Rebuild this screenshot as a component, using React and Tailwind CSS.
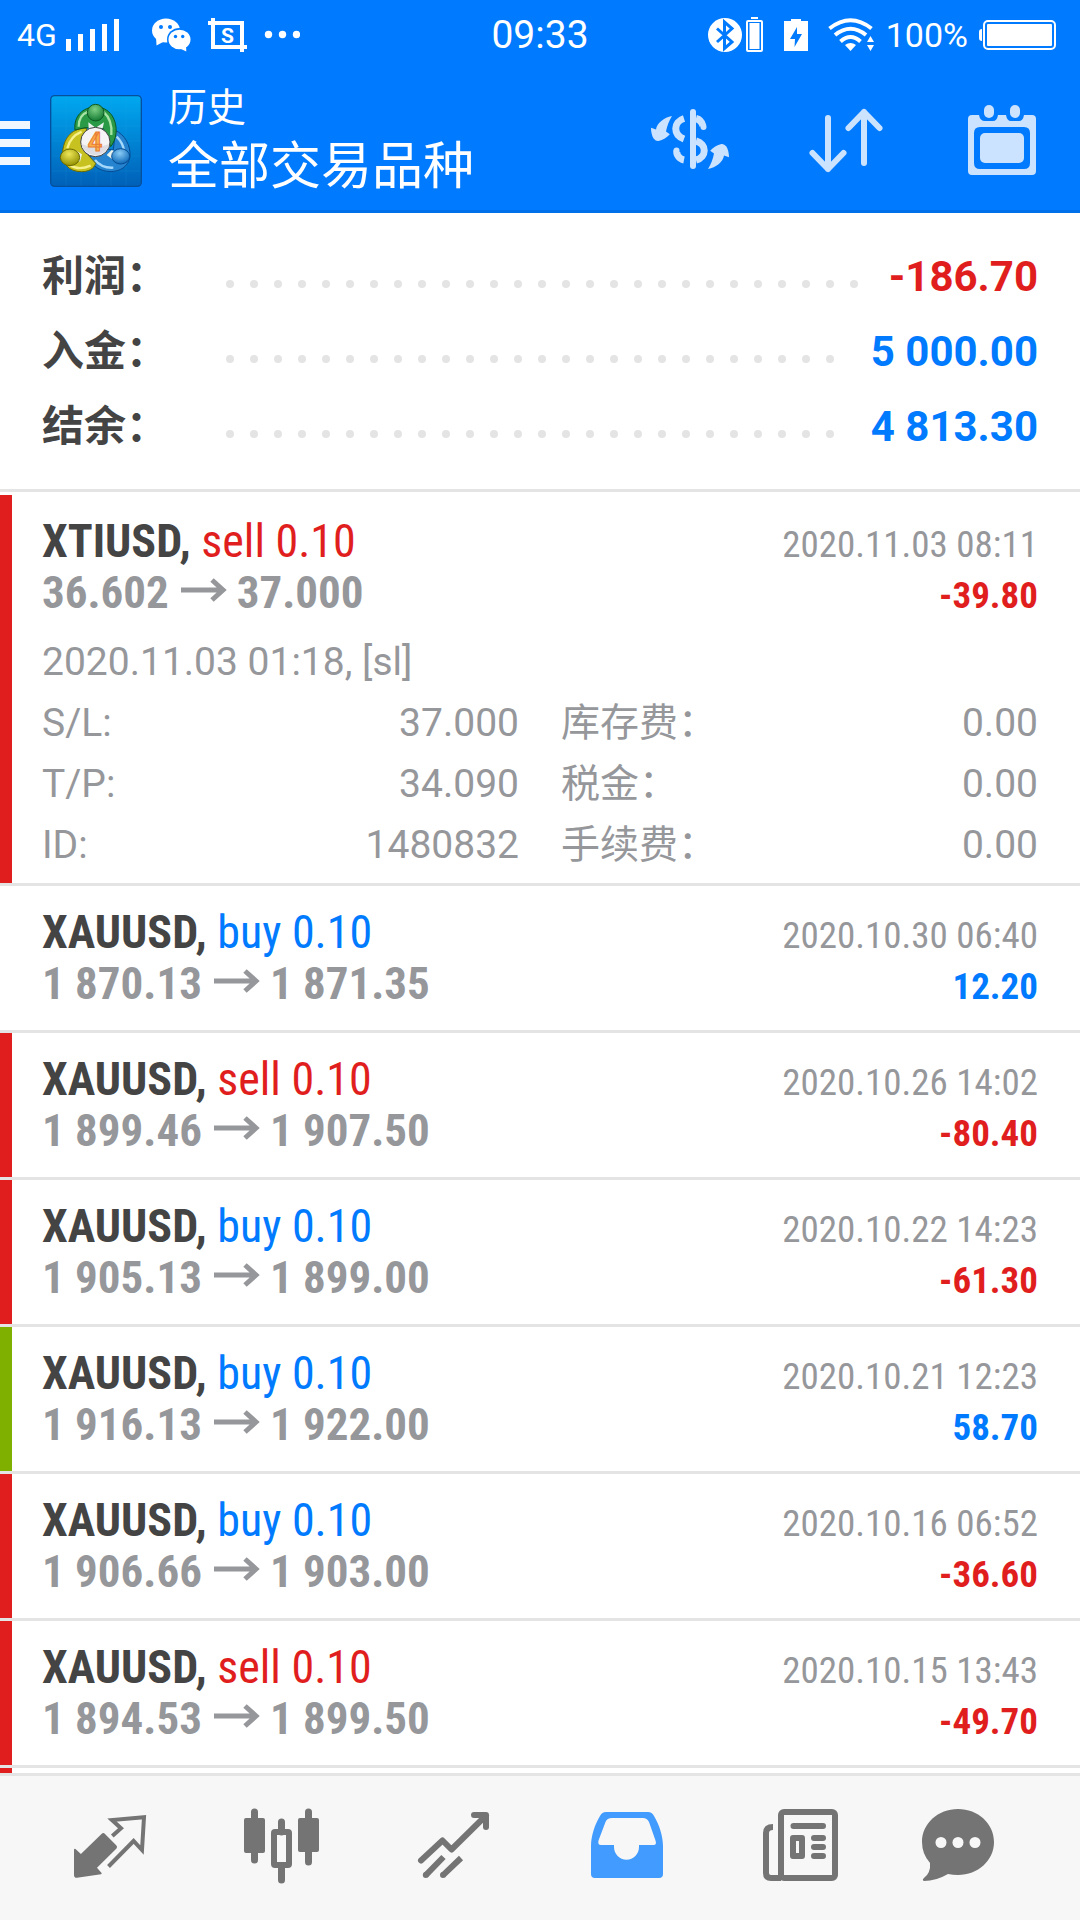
import React from 'react';

const summary = [
    { label: '利润：', value: '-186.70', negative: true },
    { label: '入金：', value: '5 000.00' },
    { label: '结余：', value: '4 813.30' }
];

const openDeal = {
    symbol: 'XTIUSD', side: 'sell', volume: '0.10', from: '36.602', to: '37.000',
    time: '2020.11.03 08:11', profit: '-39.80', bar: 'border-[#e11e1e]',
    comment: '2020.11.03 01:18, [sl]',
    details: [
        ['S/L:', '37.000'], ['库存费：', '0.00'],
        ['T/P:', '34.090'], ['税金：', '0.00'],
        ['ID:', '1480832'], ['手续费：', '0.00']
    ]
};

const deals = [
    { symbol: 'XAUUSD', side: 'buy', volume: '0.10', from: '1 870.13', to: '1 871.35', time: '2020.10.30 06:40', profit: '12.20', bar: 'border-white' },
    { symbol: 'XAUUSD', side: 'sell', volume: '0.10', from: '1 899.46', to: '1 907.50', time: '2020.10.26 14:02', profit: '-80.40', bar: 'border-[#e11e1e]' },
    { symbol: 'XAUUSD', side: 'buy', volume: '0.10', from: '1 905.13', to: '1 899.00', time: '2020.10.22 14:23', profit: '-61.30', bar: 'border-[#e11e1e]' },
    { symbol: 'XAUUSD', side: 'buy', volume: '0.10', from: '1 916.13', to: '1 922.00', time: '2020.10.21 12:23', profit: '58.70', bar: 'border-[#7fb000]' },
    { symbol: 'XAUUSD', side: 'buy', volume: '0.10', from: '1 906.66', to: '1 903.00', time: '2020.10.16 06:52', profit: '-36.60', bar: 'border-[#e11e1e]' },
    { symbol: 'XAUUSD', side: 'sell', volume: '0.10', from: '1 894.53', to: '1 899.50', time: '2020.10.15 13:43', profit: '-49.70', bar: 'border-[#e11e1e]' }
];

const StatusBar = () => (
    <div className="grid grid-cols-[1fr_auto_1fr] items-center h-[70px] px-[17px] text-white">
        <div className="flex items-center">
            <span className="text-[32px] leading-[36px] w-[49px]">4G</span>
            <svg className="w-[54px] h-9" viewBox="0 0 54 36" fill="currentColor">
                <path d="M0 22h5v12H0zM12 17h5v17h-5zM24 12h5v22h-5zM36 7h5v27h-5zM48 2h5v32h-5z" />
            </svg>
            <svg className="w-10 h-9 ml-8" viewBox="0 0 40 36" fill="currentColor">
                <path d="M4 20L4.5 28.5L13 24Z" />
                <ellipse cx="14" cy="13.5" rx="14" ry="12" />
                <circle cx="9" cy="10" r="2" fill="#007aff" />
                <circle cx="18" cy="10" r="2" fill="#007aff" />
                <ellipse cx="27.5" cy="22.5" rx="12.5" ry="11.5" fill="#007aff" />
                <ellipse cx="27.5" cy="22.5" rx="11" ry="9.8" />
                <path d="M28 31.5L34.3 34.5L34 28Z" />
                <circle cx="23.5" cy="19.5" r="1.7" fill="#007aff" />
                <circle cx="30.7" cy="19.5" r="1.7" fill="#007aff" />
            </svg>
            <svg className="w-10 h-9 ml-4" viewBox="0 0 40 36">
                <path d="M5 1V30H39M0 6H34V35" fill="none" stroke="currentColor" strokeWidth="4" />
                <text x="19.5" y="25.5" fontSize="21" fontWeight="700" textAnchor="middle" fill="currentColor">S</text>
            </svg>
            <svg className="w-9 h-9 ml-4" viewBox="0 0 36 36" fill="currentColor">
                <circle cx="4.5" cy="17.5" r="3.7" />
                <circle cx="18.5" cy="17.5" r="3.7" />
                <circle cx="32.5" cy="17.5" r="3.7" />
            </svg>
        </div>
        <span className="text-[39px] leading-[40px]">09:33</span>
        <div className="flex items-center justify-end pr-[7px]">
            <svg className="w-14 h-9" viewBox="0 0 56 36">
                <circle cx="17" cy="18" r="17" fill="currentColor" />
                <path d="M9 11.5L24 25L16.5 31.5V5L24 11.5L9 25" fill="none" stroke="#007aff" strokeWidth="3" />
                <path d="M43 0h7v2h-7z" fill="currentColor" />
                <rect x="39" y="4" width="15" height="30" rx="1" fill="none" stroke="currentColor" strokeWidth="2" />
                <path d="M41.5 6h10v26h-10z" fill="currentColor" />
            </svg>
            <svg className="w-6 h-9 ml-5" viewBox="0 0 24 36">
                <path d="M0 4h7V2h10v2h7v30H0z" fill="currentColor" />
                <path d="M13 10L6 22h5l-.5 8L18 17h-5z" fill="#007aff" />
            </svg>
            <svg className="w-[46px] h-9 ml-5" viewBox="0 0 46 36" fill="none" stroke="currentColor" strokeWidth="4">
                <path d="M1.5 11.5Q22.5-5 43.5 11.5M7 18Q22.5 5.5 38 18M12.5 24.5Q22.5 15.5 32.5 24.5" />
                <path d="M17 28Q22.5 24 28 28L22.5 34Z" fill="currentColor" stroke="none" />
                <path d="M42 25l3.5-6l3.5 6zM42 28h7l-3.5 6z" fill="currentColor" stroke="none" transform="translate(-3 0)" />
            </svg>
            <span className="text-[34px] leading-[36px] ml-3">100%</span>
            <svg className="w-[78px] h-9 ml-[10px]" viewBox="0 0 78 36">
                <path d="M4 12Q1 12 1 15v6q0 3 3 3z" fill="currentColor" />
                <rect x="6" y="4" width="71" height="28" rx="4" fill="none" stroke="currentColor" strokeWidth="2" />
                <rect x="9" y="7" width="65" height="22" rx="1" fill="currentColor" />
            </svg>
        </div>
    </div>
);

const Logo = () => (
    <svg className="w-[92px] h-[92px] ml-5" viewBox="0 0 276 276">
        <defs>
            <linearGradient id="logoBg" x1="0" y1="0" x2="0" y2="1">
                <stop offset="0" stopColor="#00a8f0" />
                <stop offset="1" stopColor="#0060b8" />
            </linearGradient>
            <radialGradient id="logoGreen" cx=".45" cy=".3" r=".7">
                <stop offset="0" stopColor="#7cd083" />
                <stop offset="1" stopColor="#147a33" />
            </radialGradient>
            <radialGradient id="logoYellow" cx=".45" cy=".3" r=".7">
                <stop offset="0" stopColor="#eee65a" />
                <stop offset="1" stopColor="#929000" />
            </radialGradient>
            <radialGradient id="logoBlue" cx=".45" cy=".3" r=".7">
                <stop offset="0" stopColor="#8acbf5" />
                <stop offset="1" stopColor="#0b68b8" />
            </radialGradient>
        </defs>
        <rect x="2" y="2" width="272" height="272" rx="12" fill="url(#logoBg)" stroke="#05509c" strokeWidth="4" />
        <path d="M48 4V272M93 4V272M138 4V272M183 4V272M228 4V272M4 48H272M4 93H272M4 138H272M4 183H272M4 228H272" stroke="#35b0ee" strokeOpacity=".2" strokeWidth="2" />
        <path d="M196 106C225 120 242 150 240 185C235 215 210 230 180 230C150 228 130 215 116 190L150 160L190 165Z" fill="#2583cf" stroke="#064c92" strokeWidth="3" />
        <path d="M200 125Q220 145 222 168M135 195Q155 220 190 218" fill="none" stroke="#a5d8fa" strokeWidth="7" />
        <path d="M110 100C70 98 42 125 38 170C36 205 55 230 95 230C115 230 132 222 137 205L105 170Z" fill="#c8c220" stroke="#6d6b00" strokeWidth="3" />
        <path d="M95 110Q60 125 52 160M60 210Q85 228 122 212" fill="none" stroke="#f6f18a" strokeWidth="7" />
        <path d="M75 105C70 65 98 36 137 36C180 36 202 75 198 115C196 132 190 145 182 155L160 100L105 98Z" fill="#2a9a47" stroke="#0c5a22" strokeWidth="3" />
        <path d="M86 95Q86 60 115 50M160 50Q188 75 184 120" fill="none" stroke="#a6e3a4" strokeWidth="7" />
        <path d="M115 82L137 98L162 82L158 100H116ZM75 165L96 178L90 200L75 190ZM185 165L198 170L190 195L170 180Z" fill="#e8f3ee" />
        <circle cx="137" cy="53" r="25" fill="url(#logoGreen)" stroke="#0c5a22" strokeWidth="3" />
        <ellipse cx="60" cy="187" rx="29" ry="25" fill="url(#logoYellow)" stroke="#6d6b00" strokeWidth="3" />
        <ellipse cx="212" cy="184" rx="27" ry="23" fill="url(#logoBlue)" stroke="#064c92" strokeWidth="3" />
        <circle cx="136" cy="141" r="44" fill="#f4f4f6" stroke="#444" strokeWidth="3" />
        <path d="M94 147A43 43 0 0 0 178 147Q136 165 94 147Z" fill="#dcdce2" />
        <text x="135" y="168" fontSize="76" fontWeight="700" textAnchor="middle" fill="#fbb04a" stroke="#ea7a35" strokeWidth="3">4</text>
    </svg>
);

const Header = () => (
    <header className="bg-[#007aff] border-b-[3px] border-[#0070ea] text-white">
        <StatusBar />
        <div className="flex items-center h-[140px] pt-[2px] pr-[30px]">
            <button type="button" aria-label="菜单" className="flex flex-col gap-[10px] w-[30px] mt-1">
                <span className="h-2 bg-[#f0f7ff]" />
                <span className="h-2 bg-[#f0f7ff]" />
                <span className="h-2 bg-[#f0f7ff]" />
            </button>
            <Logo />
            <div className="flex-1 ml-[26px]">
                <p className="text-[39px] leading-[52px]">历史</p>
                <h1 className="text-[51px] leading-[66px]">全部交易品种</h1>
            </div>
            <div className="flex gap-[60px] text-[#cce3ff]">
                <button type="button" aria-label="资金">
                    <svg className="w-24 h-24" viewBox="0 0 96 96" fill="none" stroke="currentColor" strokeWidth="6">
                        <path d="M51 19V73" strokeLinecap="round" />
                        <path d="M42 25.5C31 29 31 42 42 46M35 58C34 61 37 66 42 67M54 25.5C58 26.5 60 29 61 33M54 48C65 51 65 64 54 67" strokeWidth="7" />
                        <circle cx="34.5" cy="57.5" r="3" fill="currentColor" stroke="none" />
                        <circle cx="61.5" cy="34" r="3" fill="currentColor" stroke="none" />
                        <path d="M30 23C22 24.5 15 30 14 36.5L9 34.7C9 39 10 43 11.6 45.5Q14 48.5 16.5 48C21 47 25 44.5 27.8 41.3L24 38.5C25 33 27 28 30 23Z" fill="currentColor" stroke="none" />
                        <path d="M30 23C22 24.5 15 30 14 36.5L9 34.7C9 39 10 43 11.6 45.5Q14 48.5 16.5 48C21 47 25 44.5 27.8 41.3L24 38.5C25 33 27 28 30 23Z" fill="currentColor" stroke="none" transform="rotate(180 48 49.5)" />
                    </svg>
                </button>
                <button type="button" aria-label="排序">
                    <svg className="w-24 h-24" viewBox="0 0 96 96" fill="none" stroke="currentColor" strokeWidth="6" strokeLinecap="round" strokeLinejoin="round">
                        <path d="M30 25V76M14.5 60L30 76L45.5 60M66 70V19M50.5 35L66 19L81.5 35" />
                    </svg>
                </button>
                <button type="button" aria-label="日期">
                    <svg className="w-24 h-24" viewBox="0 0 96 96" fill="currentColor">
                        <path fillRule="evenodd" d="M18 22H25Q26 28 31 28H39Q43 28 44 22H52Q53 28 57 28H65Q69 28 70 22H78Q82 22 82 26V78Q82 82 78 82H18Q14 82 14 78V26Q14 22 18 22ZM26 34Q20 34 20 40V70Q20 76 26 76H70Q76 76 76 70V40Q76 34 70 34Z" />
                        <rect x="26" y="40" width="44" height="30" rx="5" />
                        <rect x="30" y="12" width="10" height="13" rx="5" />
                        <rect x="56" y="12" width="10" height="13" rx="5" />
                    </svg>
                </button>
            </div>
        </div>
    </header>
);

const Deal = ({ deal }) => (
    <div className={`border-l-[12px] pl-[30px] pr-[42px] pt-[21px] ${deal.bar}`}>
        <div className="flex justify-between items-baseline h-[51px] font-['Roboto_Condensed','Liberation_Sans_Narrow',sans-serif] leading-[51px]">
            <p className="text-[46px]">
                <span className="font-bold text-[#444444]">{deal.symbol},</span>{' '}
                <span className={deal.side === 'sell' ? 'text-[#e11e1e]' : 'text-[#007aff]'}>{deal.side} {deal.volume}</span>
            </p>
            <time className="text-[37px] text-[#96979b]">{deal.time}</time>
        </div>
        <div className="flex justify-between items-baseline h-[51px] font-['Roboto_Condensed','Liberation_Sans_Narrow',sans-serif] font-bold leading-[51px]">
            <p className="text-[45px] text-[#96979b]">
                {deal.from}
                <svg className="inline-block w-12 h-8 ml-3 mr-2 align-baseline" viewBox="0 0 48 32" fill="none" stroke="currentColor" strokeWidth="5">
                    <path d="M0 14H42M31 4L42 14L31 24" />
                </svg>
                {deal.to}
            </p>
            <p className={`text-[37px] ${deal.profit.startsWith('-') ? 'text-[#e11e1e]' : 'text-[#007aff]'}`}>{deal.profit}</p>
        </div>
        {deal.details && (
            <div className="pt-[14px] pb-[7px] text-[39px] leading-[61px] text-[#96979b]">
                <p>{deal.comment}</p>
                <dl className="grid grid-cols-2 gap-x-[42px]">
                    {deal.details.map(([name, value]) => (
                        <div key={name} className="flex justify-between h-[61px]">
                            <dt>{name}</dt>
                            <dd>{value}</dd>
                        </div>
                    ))}
                </dl>
            </div>
        )}
    </div>
);

const tabs = [
    {
        name: '行情',
        icon: (
            <>
                <path d="M39.5 34Q41.3 32 43 34L54 45Q56 46.7 54.5 48.5L35 67.7L39.6 73Q40 74 39 74.3L15 77.8Q12 78 12 75V49.5Q12.5 48.5 13.5 49L18.9 54Z" fill="currentColor" />
                <path d="M50.3 36L59 28.3L50 20L82 17.3L80 50L71.6 41L46.5 66.5" fill="none" stroke="currentColor" strokeWidth="4" />
            </>
        )
    },
    {
        name: '图表',
        icon: (
            <>
                <path d="M20.5 12V60M47.5 22V32M47.5 66V80M74.5 12V62" stroke="currentColor" strokeWidth="7" strokeLinecap="round" />
                <rect x="10" y="18" width="21" height="35" rx="2" fill="currentColor" />
                <rect x="64" y="18" width="21" height="34" rx="2" fill="currentColor" />
                <rect x="40" y="32" width="15" height="33" rx="1" fill="none" stroke="currentColor" strokeWidth="6" />
            </>
        )
    },
    {
        name: '交易',
        icon: (
            <g fill="none" stroke="currentColor" strokeWidth="6">
                <path d="M15 60.5L36.5 40.5L45.5 49.5L80 15.5M68 15H80V27" strokeLinecap="round" strokeLinejoin="round" />
                <path d="M19.6 75.3L37.5 57M36.8 75.3L55 58" />
                <circle cx="19.8" cy="75" r="1.5" strokeWidth="3" />
                <circle cx="37" cy="75" r="1.5" strokeWidth="3" />
            </g>
        )
    },
    {
        name: '历史',
        active: true,
        icon: (
            <path fillRule="evenodd" fill="currentColor" d="M28 12H70Q74 12 76 16C81 24 85 36 85 46V74Q85 78 81 78H17Q13 78 13 74V46C13 36 17 24 22 16Q24 12 28 12ZM34 18Q29 18 27.5 22L20.5 40.5Q19.5 45 23 45H36V47C36 54 41.5 59.7 48.5 59.7S61 54 61 47V45H75.5Q79 45 77.5 40.5L71 22Q69 18 65 18Z" />
        )
    },
    {
        name: '新闻',
        icon: (
            <>
                <rect x="31" y="12" width="54" height="66" rx="3" fill="none" stroke="currentColor" strokeWidth="6" />
                <path d="M23 27Q16 27 16 33V73Q16 78 21 78H31" fill="none" stroke="currentColor" strokeWidth="6" />
                <path d="M43.5 26H73M64 38H73M64 47H73M64 56H73" stroke="currentColor" strokeWidth="6" strokeLinecap="round" />
                <rect x="43" y="38" width="9" height="18" fill="none" stroke="currentColor" strokeWidth="6" strokeLinejoin="round" />
            </>
        )
    },
    {
        name: '消息',
        icon: (
            <>
                <path d="M36 9C56 9 72 23.5 72 42S56 75 36 75Q31 75 26 74Q14 81 2 81Q0 80 1.5 78.5Q9 73 8 63Q0 54 0 42C0 23.5 16 9 36 9Z" fill="currentColor" />
                <circle cx="19" cy="42.5" r="5.5" fill="#f7f7f7" />
                <circle cx="36" cy="42.5" r="5.5" fill="#f7f7f7" />
                <circle cx="53" cy="42.5" r="5.5" fill="#f7f7f7" />
            </>
        )
    }
];

const App = () => {
    return (
        <div className="flex flex-col h-screen bg-white font-[Roboto,'Noto_Sans_CJK_SC',sans-serif]">
            <Header />
            <main className="flex flex-col flex-1 min-h-0 overflow-hidden">
                <dl className="px-[42px] pt-[26px] pb-[25px] border-b-[3px] border-[#e4e4e4]">
                    {summary.map((row) => (
                        <div key={row.label} className="flex items-center h-[75px] text-[42px] leading-[75px]">
                            <dt className="w-44 font-bold text-[#444444]">{row.label}</dt>
                            <dd className="flex flex-1 items-center font-bold">
                                <span aria-hidden="true" className="flex flex-1 flex-wrap h-2 mr-[10px] mt-[14px] overflow-hidden">
                                    {Array.from({ length: 40 }, (_, i) => (
                                        <span key={i} className="w-2 h-2 mx-2 rounded-full bg-[#e4e4e4]" />
                                    ))}
                                </span>
                                <span className={row.negative ? 'text-[#e11e1e]' : 'text-[#007aff]'}>{row.value}</span>
                            </dd>
                        </div>
                    ))}
                </dl>
                <ul className="flex flex-col flex-1 pt-[3px]">
                    <li className="border-b-[3px] border-[#e4e4e4]">
                        <Deal deal={openDeal} />
                    </li>
                    {deals.map((deal) => (
                        <li key={deal.time} className="flex flex-col h-[147px] border-b-[3px] border-[#e4e4e4] *:flex-1">
                            <Deal deal={deal} />
                        </li>
                    ))}
                    <li className="flex-1 border-l-[12px] border-[#e11e1e]" />
                </ul>
            </main>
            <nav className="flex h-[147px] px-6 border-t-[3px] border-[#e4e4e4] bg-[#f7f7f7]">
                {tabs.map((tab) => (
                    <button key={tab.name} type="button" aria-label={tab.name} className={`flex flex-1 items-center justify-center ${tab.active ? 'text-[#429bff]' : 'text-[#747474]'}`}>
                        <svg className="w-24 h-24" viewBox="0 0 96 96">{tab.icon}</svg>
                    </button>
                ))}
            </nav>
        </div>
    );
};

export default App;
